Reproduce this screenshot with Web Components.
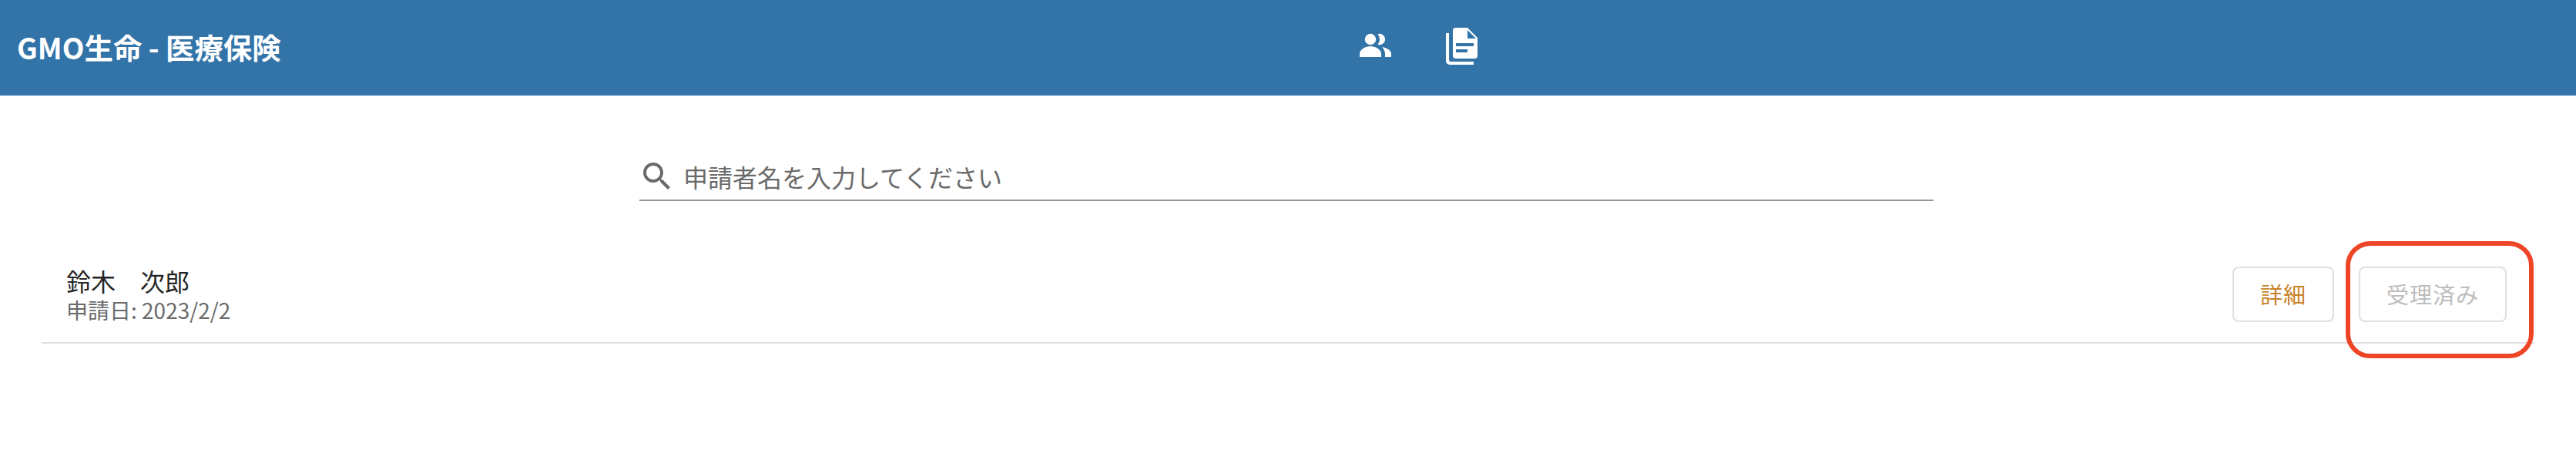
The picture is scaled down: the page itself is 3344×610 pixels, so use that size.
<!DOCTYPE html>
<html lang="ja"><head><meta charset="utf-8">
<style>
html,body{margin:0;padding:0;background:#fff}
body{width:3344px;height:610px;overflow:hidden;font-family:"Noto Sans CJK JP","Noto Sans",sans-serif;position:relative}
</style></head><body>
<template id="t-header"><style>
:host{display:grid;grid-template-columns:1743px auto 1fr;align-items:center;height:124px;background:#3374a8;color:#fff;box-sizing:border-box;padding:0 22px}
.t{font-size:37.400px;font-weight:700;line-height:1;letter-spacing:0}
nav{display:flex;align-items:flex-start;gap:71px;height:124px}
svg{display:block;fill:#fff}
.a{margin-top:43px}.b{margin-top:36px}
</style>
<div class="t"><slot name="title"></slot></div>
<nav>
<svg class="a" width="41" height="31" viewBox="0 0 41 31"><circle cx="14" cy="8" r="7.2"/><path d="M23.500 1.200a7.200 7.200 0 1 1 0 13.600A10.500 10.500 0 0 0 23.500 1.200z"/><path d="M0 31v-4c0-6 8-10 14-10s14 4 14 10v4z"/><path d="M29 18c6 1 12 4 12 9v4h-8v-4c0-3.500-1.500-6.500-4-9z"/></svg>
<svg class="b" width="41" height="48" viewBox="0 0 41 48"><path d="M0 7h4v35a2 2 0 0 0 2 2h30v4H5a5 5 0 0 1-5-5z"/><path fill-rule="evenodd" d="M13 0h15l13 13v23a4 4 0 0 1-4 4H13a4 4 0 0 1-4-4V4a4 4 0 0 1 4-4zM28 3v11h11zM13 20v4h23v-4zM13 28v4h15v-4z"/></svg>
</nav><div></div></template>

<template id="t-search"><style>
:host{display:flex;align-items:center;box-sizing:border-box;width:1680px;height:57px;margin:80px 0 0 830px;border-bottom:2px solid #949494;color:#6a6a6a;padding:0 0 6px 5px;gap:16px}
svg{display:block;fill:#6a6a6a;flex:none}
span{font-size:32px;line-height:1}
</style>
<svg width="36" height="36" viewBox="3 3 18 18"><path d="M15.500 14h-.79l-.28-.27C15.410 12.590 16 11.110 16 9.500 16 5.910 13.090 3 9.500 3S3 5.910 3 9.500 5.910 16 9.500 16c1.610 0 3.090-.59 4.230-1.570l.27.28v.79l5 4.990L20.490 19l-4.990-5zm-6 0C7.010 14 5 11.990 5 9.500S7.010 5 9.500 5 14 7.010 14 9.500 11.990 14 9.500 14z"/></svg>
<span><slot></slot></span></template>

<template id="t-row"><style>
:host{display:flex;align-items:center;justify-content:space-between;box-sizing:border-box;height:128px;margin:57px 54px 0;padding:0 36px 0 32px;border-bottom:2px solid #e0e0e0}
.x{padding-top:3px}
.n{font-size:32px;line-height:38px;color:#262626}
.d{font-size:28px;line-height:38px;color:#6a6a6a}
.a{display:flex;gap:32px;padding-top:1px}
</style>
<div class="x"><div class="n"><slot name="name"></slot></div><div class="d"><slot name="date"></slot></div></div>
<div class="a"><slot name="actions"></slot></div></template>

<template id="t-btn"><style>
:host{display:flex;align-items:center;justify-content:center;box-sizing:border-box;height:72px;width:132px;border:2px solid #e0e0e0;border-radius:8px;font-size:29px;line-height:1;background:#fff;letter-spacing:1px;color:#c8832a}
:host([disabled]){color:#bdbdbd;width:192px}
</style><slot></slot></template>

<template id="t-mark"><style>
:host{position:absolute;left:3045px;top:313px;width:244px;height:152px;box-sizing:border-box;border:6px solid #ef4527;border-radius:32px;pointer-events:none}
</style></template>

<app-header><span slot="title">GMO生命 - 医療保険</span></app-header>
<app-search>申請者名を入力してください</app-search>
<app-row>
<span slot="name">鈴木　次郎</span><span slot="date">申請日: 2023/2/2</span>
<app-btn slot="actions">詳細</app-btn><app-btn slot="actions" disabled>受理済み</app-btn>
</app-row>
<app-mark></app-mark>
<script>
for (const [tag,id] of [['app-header','t-header'],['app-search','t-search'],['app-row','t-row'],['app-btn','t-btn'],['app-mark','t-mark']]) {
  customElements.define(tag, class extends HTMLElement {
    constructor(){super();this.attachShadow({mode:'open'}).appendChild(document.getElementById(id).content.cloneNode(true));}
  });
}
</script>
</body></html>
